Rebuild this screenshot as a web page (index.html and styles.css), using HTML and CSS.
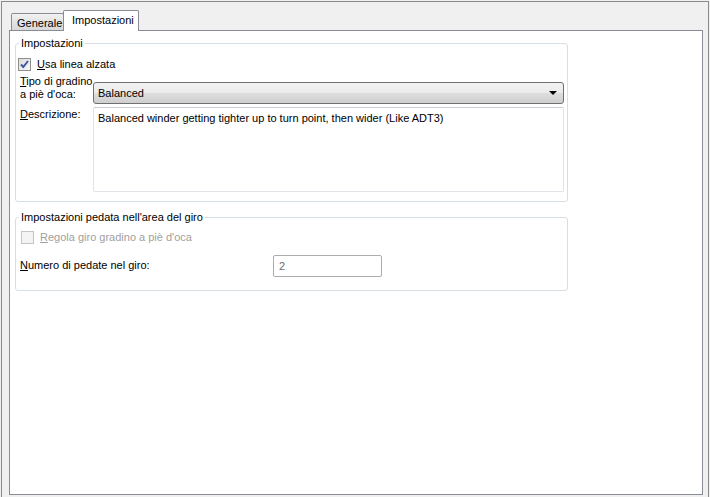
FILE: index.html
```html
<!DOCTYPE html>
<html lang="it">
<head>
    <meta charset="UTF-8">
    <title>Impostazioni</title>
    <link rel="stylesheet" href="styles.css">
</head>
<body>
    <div class="window">
        <!-- Tabs -->
        <div class="tabs">
            <div class="tab">Generale</div>
            <div class="tab active">Impostazioni</div>
        </div>

        <div class="panel">
            <fieldset class="group group-main">
                <legend>Impostazioni</legend>
                <div class="check-row">
                    <span class="check checked">
                        <svg width="11" height="11" viewBox="0 0 11 11"><path d="M2 5.5 L4.3 8 L9 2" fill="none" stroke="#3c5a9a" stroke-width="2"/></svg>
                    </span>
                    <span><u>U</u>sa linea alzata</span>
                </div>
                <div class="form-row row-type">
                    <label class="label"><u>T</u>ipo di gradino<br>a piè d'oca:</label>
                    <div class="select">
                        <span>Balanced</span>
                        <span class="arrow"></span>
                    </div>
                </div>
                <div class="form-row row-desc">
                    <label class="label"><u>D</u>escrizione:</label>
                    <div class="textarea">Balanced winder getting tighter up to turn point, then wider (Like ADT3)</div>
                </div>
            </fieldset>

            <fieldset class="group group-turn">
                <legend>Impostazioni pedata nell'area del giro</legend>
                <div class="check-row disabled">
                    <span class="check"></span>
                    <span><u>R</u>egola giro gradino a piè d'oca</span>
                </div>
                <div class="form-row row-count">
                    <label class="label label-wide"><u>N</u>umero di pedate nel giro:</label>
                    <div class="textbox">2</div>
                </div>
            </fieldset>
        </div>
    </div>
</body>
</html>
```

FILE: styles.css
```css
/* Window colours */
:root {
    --frame: #8a8a8a;
    --tab-border: #898c95;
    --group-border: #d5dfe5;
    --face: #f0f0f0;
}

body {
    margin: 0;
    background: var(--face);
    font-family: "Liberation Sans", Arial, sans-serif;
    font-size: 11px;
    line-height: 13px;
    color: #000;
    overflow: hidden;
}

.window {
    margin: 1px 0 0 1px;
    width: 708px;
    height: 496px;
    box-sizing: border-box;
    border: 1px solid var(--frame);
    border-bottom: none;
    padding: 0 5px 0 7px;
}

/* Tabs */
.tabs {
    display: flex;
    align-items: flex-end;
    height: 28px;
    padding-left: 2px;
}

.tab {
    box-sizing: border-box;
    height: 17px;
    width: 53px;
    padding: 3px 0 0 5px;
    border: 1px solid var(--tab-border);
    border-bottom: none;
    background: linear-gradient(to bottom, #f2f2f2, #e3e3e3 50%, #d9d9d9);
    border-radius: 2px 2px 0 0;
}

.tab.active {
    position: relative;
    z-index: 1;
    height: 21px;
    width: 76px;
    margin-left: -1px;
    margin-bottom: -1px;
    padding: 3px 0 0 8px;
    background: #fff;
}

.panel {
    box-sizing: border-box;
    width: 694px;
    height: 465px;
    border: 1px solid var(--tab-border);
    background: #fff;
    padding: 6px 5px 0 5px;
}

/* Group boxes */
.group {
    box-sizing: border-box;
    width: 553px;
    margin: 0;
    padding: 0 3px 9px 4px;
    border: 1px solid var(--group-border);
    border-radius: 3px;
}

.group legend {
    padding: 0 2px;
    margin-left: -1px;
}

.group-turn {
    margin-top: 9px;
    padding-bottom: 13px;
}

.check-row {
    display: flex;
    align-items: center;
    height: 15px;
    margin-top: 7px;
    margin-left: -2px;
}

.group-turn .check-row {
    margin-top: 6px;
    margin-left: 1px;
}

.check {
    box-sizing: border-box;
    width: 13px;
    height: 13px;
    margin-right: 6px;
    border: 1px solid #8f8f8f;
    background: linear-gradient(135deg, #dcdcdc, #f8f8f8);
    display: flex;
    align-items: center;
    justify-content: center;
}

.disabled {
    color: #a0a0a0;
}

.disabled .check {
    border-color: #c4c4c4;
    background: #f4f4f4;
}

.form-row {
    display: flex;
    align-items: flex-start;
}

.label {
    width: 73px;
    flex-shrink: 0;
}

.label-wide {
    width: 253px;
    padding-top: 4px;
}

.row-type {
    margin-top: 3px;
}

.select {
    box-sizing: border-box;
    flex: 1;
    height: 22px;
    margin-top: 7px;
    padding: 0 6px 0 4px;
    border: 1px solid #707070;
    border-radius: 3px;
    background: linear-gradient(to bottom, #f2f2f2, #ebebeb 50%, #dddddd 51%, #cfcfcf);
    display: flex;
    align-items: center;
    justify-content: space-between;
}

.arrow {
    width: 0;
    height: 0;
    border-left: 4px solid transparent;
    border-right: 4px solid transparent;
    border-top: 4px solid #000;
}

.row-desc {
    margin-top: 3px;
}

.row-desc .label {
    padding-top: 1px;
}

.textarea {
    box-sizing: border-box;
    flex: 1;
    height: 85px;
    padding: 4px 4px;
    border: 1px solid #e0e3e8;
    border-top-color: #c9ccd3;
    border-radius: 2px;
}

.row-count {
    margin-top: 10px;
}

.textbox {
    box-sizing: border-box;
    width: 109px;
    height: 22px;
    padding: 4px 5px;
    border: 1px solid #acacac;
    border-radius: 2px;
    color: #6d6d6d;
}
```
